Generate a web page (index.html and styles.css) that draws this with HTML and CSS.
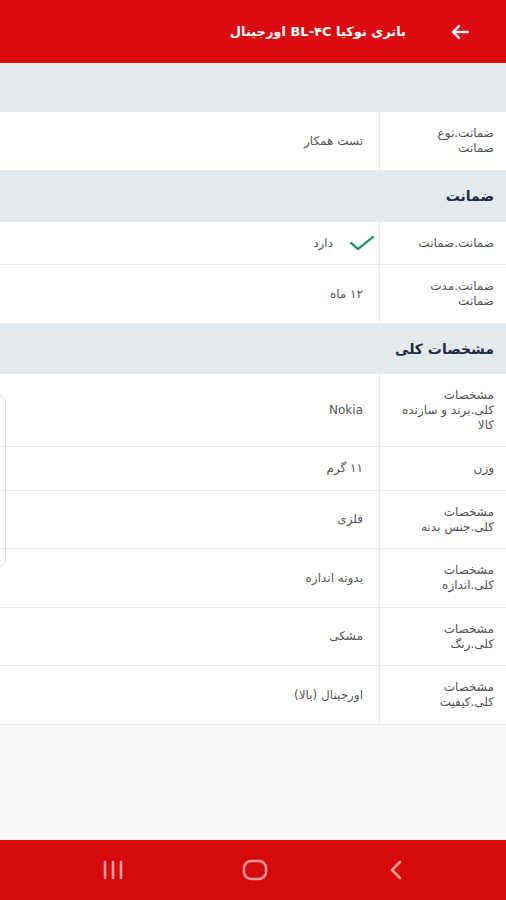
FILE: index.html
```html
<!DOCTYPE html>
<html lang="fa" dir="rtl">
<head>
<meta charset="utf-8">
<title>باتری نوکیا BL-۴C اورجینال</title>
<link rel="stylesheet" href="styles.css">
</head>
<body>
<div class="screen">
  <header class="topbar">
    <svg class="back" width="20" height="16" viewBox="0 0 20 16" aria-hidden="true">
      <path d="M2 8 H17 M11 2 L17 8 L11 14" fill="none" stroke="#fff" stroke-width="2.4" stroke-linecap="round" stroke-linejoin="round"/>
    </svg>
    <h1 class="title">باتری نوکیا BL-۴C اورجینال</h1>
  </header>

  <main class="content">
    <div class="band"></div>
    <div class="row"><div class="label">ضمانت.نوع<br>ضمانت</div><div class="value">تست همکار</div></div>

    <div class="section">ضمانت</div>
    <div class="row"><div class="label">ضمانت.ضمانت</div><div class="value">
      <svg class="check" width="26" height="16" viewBox="0 0 26 16" aria-hidden="true"><path d="M2 8 L9 14 L24 2" fill="none" stroke="#2f9a5e" stroke-width="2.4" stroke-linecap="round" stroke-linejoin="round"/></svg>
      <span>دارد</span></div></div>
    <div class="row"><div class="label">ضمانت.مدت<br>ضمانت</div><div class="value">۱۲ ماه</div></div>

    <div class="section section-tight">مشخصات کلی</div>
    <div class="row"><div class="label">مشخصات<br>کلی.برند و سازنده<br>کالا</div><div class="value">Nokia</div></div>
    <div class="row"><div class="label">وزن</div><div class="value">۱۱ گرم</div></div>
    <div class="row"><div class="label">مشخصات<br>کلی.جنس بدنه</div><div class="value">فلزی</div></div>
    <div class="row"><div class="label">مشخصات<br>کلی.اندازه</div><div class="value">بدونه اندازه</div></div>
    <div class="row"><div class="label">مشخصات<br>کلی.رنگ</div><div class="value">مشکی</div></div>
    <div class="row"><div class="label">مشخصات<br>کلی.کیفیت</div><div class="value">اورجینال (بالا)</div></div>
  </main>

  <div class="drawer-handle"></div>

  <nav class="sysnav" dir="ltr">
    <svg width="22" height="20" viewBox="0 0 22 20" aria-hidden="true"><path d="M3 2 V18 M11 2 V18 M19 2 V18" stroke="#f59a9a" stroke-width="2.6" stroke-linecap="round"/></svg>
    <svg width="26" height="22" viewBox="0 0 26 22" aria-hidden="true"><rect x="2" y="2" width="22" height="18" rx="7" fill="none" stroke="#f59a9a" stroke-width="2.4"/></svg>
    <svg width="16" height="22" viewBox="0 0 16 22" aria-hidden="true"><path d="M12 3 L4 11 L12 19" fill="none" stroke="#f59a9a" stroke-width="2.6" stroke-linecap="round" stroke-linejoin="round"/></svg>
  </nav>
</div>
</body>
</html>
```

FILE: styles.css
```css
* { box-sizing: border-box; }
html, body { margin: 0; padding: 0; }
body {
  font-family: "DejaVu Sans", "Noto Sans", sans-serif;
  background: #f8f8f8;
  color: #555;
}
.screen {
  position: relative;
  width: 506px;
  height: 900px;
  display: flex;
  flex-direction: column;
  overflow: hidden;
}
.topbar {
  height: 63px;
  background: #da0a10;
  display: flex;
  align-items: center;
  padding-right: 36px;
  gap: 44px;
  flex-shrink: 0;
}
.back { transform: scaleX(-1); }
.title {
  margin: 0;
  color: #fff;
  font-size: 13px;
  font-weight: bold;
}
.content {
  flex: 1;
  background: #f8f8f8;
}
.band {
  height: 49px;
  background: #e4e9ed;
}
.section {
  height: 51px;
  background: #e4e9ed;
  display: flex;
  align-items: center;
  padding-right: 12px;
  font-size: 14px;
  font-weight: bold;
  color: #1e2942;
}
.section-tight { height: 50px; }
.row {
  display: flex;
  background: #fff;
  border-bottom: 1px solid #e9e9e9;
}
.label {
  width: 127px;
  flex-shrink: 0;
  padding: 14px 12px 13.5px 6px;
  border-left: 1px solid #e6e6e6;
  font-size: 12px;
  line-height: 15px;
  white-space: nowrap;
  color: #505050;
}
.value {
  flex: 1;
  display: flex;
  align-items: center;
  gap: 16px;
  padding-right: 16px;
  font-size: 12px;
  color: #555;
}
.check { margin-right: -12px; }
.drawer-handle {
  position: absolute;
  left: -12px;
  top: 395px;
  width: 18px;
  height: 172px;
  border: 1px solid #dcdcdc;
  border-radius: 7px;
  background: transparent;
}
.sysnav {
  height: 60px;
  flex-shrink: 0;
  background: #d8090a;
  display: flex;
  align-items: center;
  padding-left: 102px;
  gap: 120px;
}
.sysnav svg:nth-child(2) { margin-left: -2px; }
```
